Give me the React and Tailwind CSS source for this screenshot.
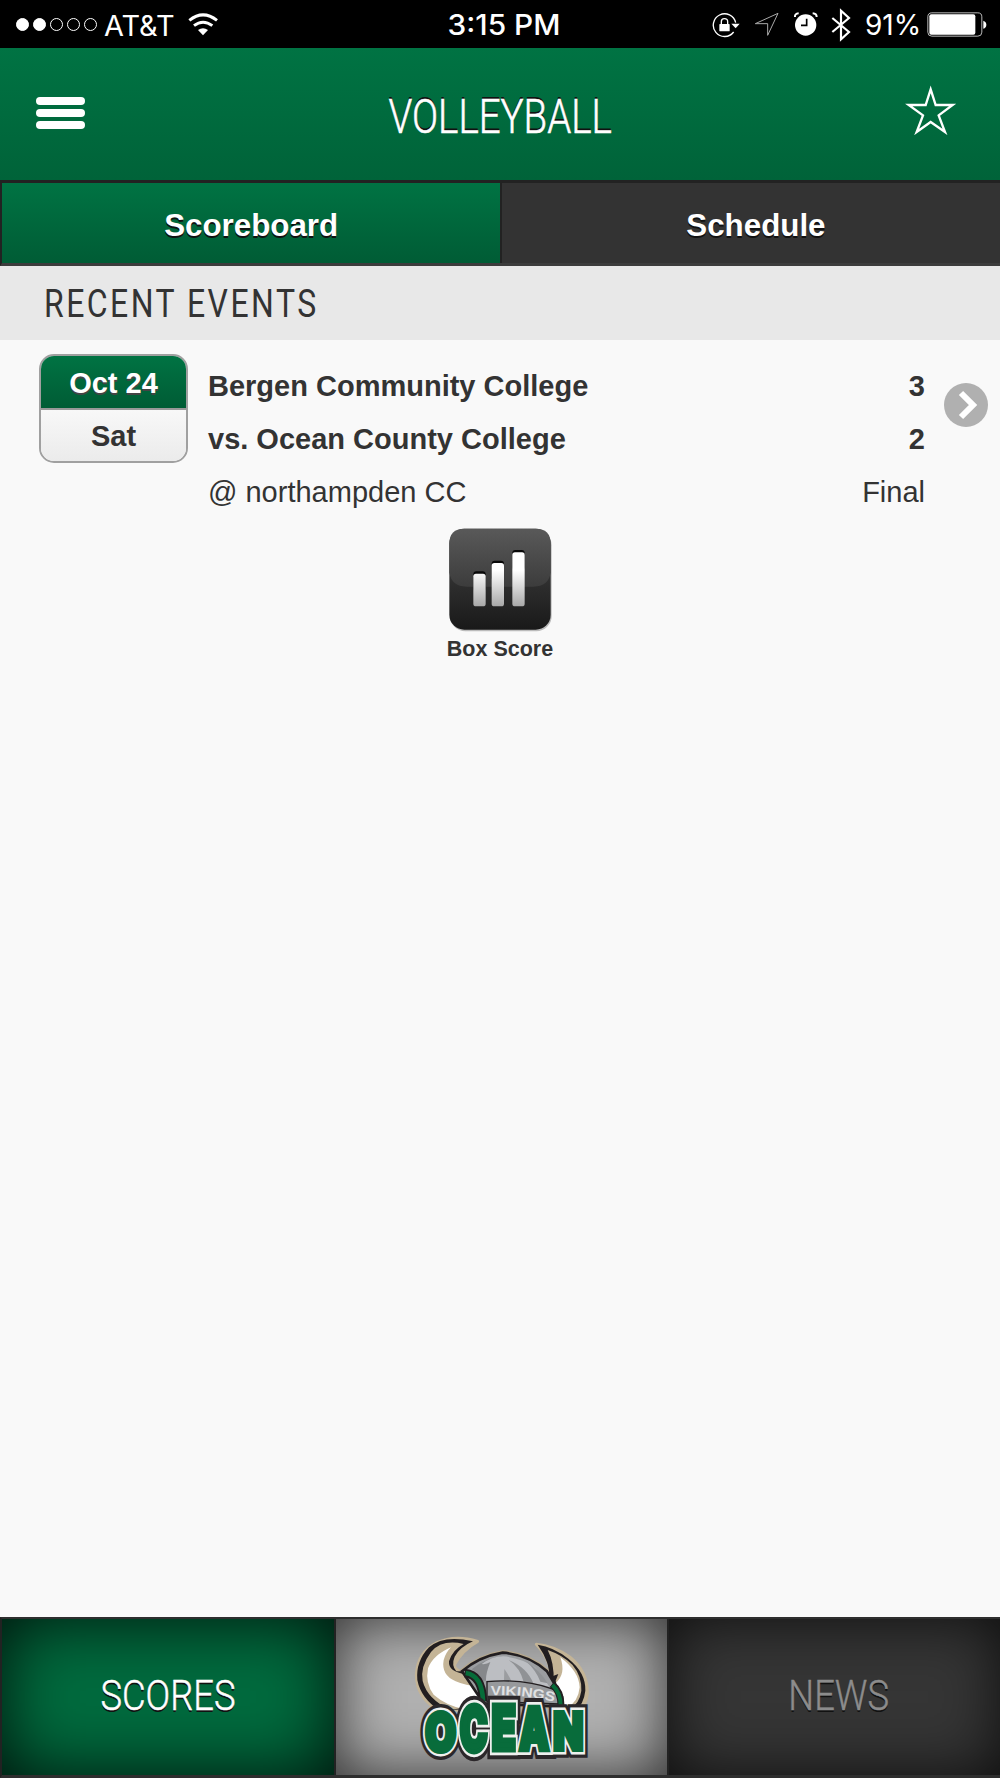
import clsx from "clsx";

const LINES = [
  { label: "Bergen Community College", value: "3", bold: true },
  { label: "vs. Ocean County College", value: "2", bold: true },
  { label: "@ northampden CC", value: "Final", bold: false },
];

const SIGNAL_DOTS = [true, true, false, false, false];

// Each letter of the team wordmark sits on its own baseline and is
// stretched separately.
const WORDMARK = [
  { ch: "O", x: 361, y: 452, sx: 1.21, sy: 1.58 },
  { ch: "C", x: 460, y: 453, sx: 1.12, sy: 1.86 },
  { ch: "E", x: 550, y: 451, sx: 1.2, sy: 1.87 },
  { ch: "A", x: 641, y: 451, sx: 1.14, sy: 1.78 },
  { ch: "N", x: 744, y: 451, sx: 1.19, sy: 1.56 },
];

function StatusBar() {
  return (
    <div className="h-12 bg-black text-white font-['Inter',sans-serif] text-[28px] leading-[48px] grid grid-cols-[1fr_auto_1fr]">
      <div className="flex items-center pl-4">
        <div className="flex gap-[4px]">
          {SIGNAL_DOTS.map((on, i) => (
            <span
              key={i}
              className={clsx("w-[13px] h-[13px] rounded-full border border-white", on ? "bg-white" : "border-[#bbb]")}
            />
          ))}
        </div>
        <span className="ml-[7px] w-[71px] h-12 whitespace-nowrap">
          <span className="inline-block origin-left scale-x-[1.03] pt-px">AT&amp;T</span>
        </span>
        <svg className="ml-[13px]" width="30" height="23" viewBox="565 37 90 69" fill="none" stroke="#fff" strokeWidth="9">
          <path d="M569 59 Q610 26 652 59" />
          <path d="M583 75 Q610 54 638 75" />
          <path d="M610 104 L595 88 Q610 77 625 88 Z" fill="#fff" stroke="none" />
        </svg>
      </div>
      <span className="font-medium pt-px pl-[7px]">
        <span className="inline-block scale-x-[1.065]">3:15 PM</span>
      </span>
      <div className="flex items-center justify-end pr-[13px]">
        <svg width="28" height="26" viewBox="124 34 84 78" fill="none" stroke="#fff" strokeWidth="4">
          <path d="M189 94 A34 34 0 1 1 195 66" />
          <path d="M182 69 H207 L195 83 Z" fill="#fff" stroke="none" />
          <rect x="146" y="70" width="31" height="22" rx="2" fill="#fff" stroke="none" />
          <path d="M152 72 V63 Q152 54 161 54 Q171 54 171 63 V72" />
        </svg>
        <svg className="ml-[14px]" width="25" height="25" viewBox="250 35 75 75" fill="none" stroke="#aaa" strokeWidth="3">
          <path d="M254 70 L322 39 L291 105 L291 70 Z" />
        </svg>
        <svg className="ml-[15px]" width="24" height="25" viewBox="370 37 72 75">
          <circle cx="405" cy="76" r="32" fill="#fff" />
          <path d="M373 52 Q372 42 384 41 M426 41 Q438 42 438 52" fill="none" stroke="#fff" strokeWidth="6" />
          <path d="M408 57 V77 H391" fill="none" stroke="#000" strokeWidth="5" />
        </svg>
        <svg className="ml-[13px]" width="20" height="34" viewBox="481 23 60 102" fill="none" stroke="#fff" strokeWidth="6.500">
          <path d="M485 53 L535 95 L511 117 V31 L535 53 L485 95" />
        </svg>
        <span className="ml-[14px] w-[57px] whitespace-nowrap">
          <span className="inline-block origin-left pt-px">91%</span>
        </span>
        <svg className="ml-[5px]" width="60" height="25" viewBox="770 37 180 75">
          <rect x="772.5" y="39.500" width="162" height="70" rx="12" fill="none" stroke="#bbb" strokeWidth="3" />
          <rect x="777" y="44" width="138" height="61" rx="6" fill="#fff" />
          <path d="M939 63 Q948 66 948 75 Q948 84 939 87 Z" fill="#fff" />
        </svg>
      </div>
    </div>
  );
}

function Header() {
  return (
    <header className="h-[132px] bg-linear-to-b from-[#007343] to-[#006339] flex items-center justify-between px-9 pr-[43px]">
      <div className="flex flex-col gap-1 w-[49px] -mt-[3px]">
        <span className="h-2 rounded-full bg-white" />
        <span className="h-2 rounded-full bg-white" />
        <span className="h-2 rounded-full bg-white" />
      </div>
      <h1 className="w-[230px] flex justify-center whitespace-nowrap pl-[10px] font-['Roboto',sans-serif] font-light text-[49px] leading-none text-white [-webkit-text-stroke:0.6px_white] [text-shadow:0_-2px_0_#111]">
        <span className="scale-x-[0.785] pt-[5px]">VOLLEYBALL</span>
      </h1>
      <svg className="-mt-[9px]" width="52" height="50" viewBox="706 255 156 150" fill="none" stroke="#fff" strokeWidth="7">
        <path d="M783 268 L798 315 L849 315 L807 346 L826 396 L783 366 L741 396 L760 346 L717 315 L768 315 Z" />
      </svg>
    </header>
  );
}

function Tabs() {
  const text = "flex items-center justify-center pt-[7px] text-[31px] font-bold text-white [text-shadow:0_2px_0_#111]";
  return (
    <div className="h-[86px] grid grid-cols-[498px_1fr] gap-0.5 bg-[#222] border-t-3 border-b-3 border-l-2 border-t-[#222] border-l-[#222] border-b-[#3c3c3c]">
      <div className={clsx(text, "bg-linear-to-b from-[#007343] to-[#005c35]")}>
        <span className="scale-x-[1.01]">Scoreboard</span>
      </div>
      <div className={clsx(text, "bg-[#333] pl-[10px]")}>
        <span className="scale-x-[1.01]">Schedule</span>
      </div>
    </div>
  );
}

function DateBadge() {
  return (
    <div className="w-[149px] h-[109px] rounded-[15px] border-2 border-[#a0a0a0] overflow-hidden text-[29px] font-bold text-center">
      <div className="h-[52px] leading-[54px] bg-linear-to-b from-[#007343] to-[#005c35] text-white [text-shadow:0_2px_0_#444]">
        Oct 24
      </div>
      <div className="h-[53px] leading-[52px] border-t-2 border-[#999] bg-linear-to-b from-[#f8f8f8] to-[#ebebeb]">Sat</div>
    </div>
  );
}

function BoxScoreIcon() {
  return (
    <svg className="ml-0.5" width="106" height="106" viewBox="84 50 318 318">
      <defs>
        <linearGradient id="base" x1="0" y1="0" x2="0" y2="1">
          <stop offset="0.5" stopColor="#303030" />
          <stop offset="1" stopColor="#191919" />
        </linearGradient>
        <linearGradient id="gloss" x1="0" y1="0" x2="0" y2="1">
          <stop offset="0" stopColor="#595959" />
          <stop offset="1" stopColor="#3c3c3c" />
        </linearGradient>
        <linearGradient id="bar" gradientUnits="userSpaceOnUse" x1="0" y1="180" x2="0" y2="288">
          <stop offset="0" stopColor="#fff" />
          <stop offset="1" stopColor="#a8a8a8" />
        </linearGradient>
      </defs>
      <rect x="90" y="59" width="305" height="304" rx="46" fill="#bbb" />
      <rect x="88" y="55" width="304" height="303" rx="45" fill="url(#base)" />
      <path d="M88 100 Q88 55 133 55 H347 Q392 55 392 100 V186 Q386 229 340 229 H140 Q94 229 88 186 Z" fill="url(#gloss)" />
      {[
        [160, 190],
        [215, 158],
        [277, 126],
      ].map(([x, y]) => (
        <g key={x}>
          <rect x={x} y={y - 7} width="37" height="60" rx="9" fill="#080808" />
          <rect x={x} y={y} width="37" height={288 - y} rx="8" fill="url(#bar)" />
        </g>
      ))}
    </svg>
  );
}

function VikingsLogo() {
  const leftHorn = "M472 124 Q425 150 402 195 Q404 213 432 218 Q478 222 488 305 L420 330 L352 330 Q288 290 288 225 Q291 158 350 128 Q403 103 472 124 Z";
  const rightHorn = "M648 133 Q700 138 748 171 Q802 215 801 280 Q798 315 774 333 L718 318 Q724 280 695 246 Q696 185 648 133 Z";
  const dome = "M425 214 Q475 170 547 158 Q625 164 680 214 L725 290 L724 320 L490 310 Z";
  return (
    <svg className="overflow-visible" width="176" height="124" viewBox="281 105 528 372">
      <g fill="#c4b496" stroke="#c4b496" strokeWidth="9" strokeLinejoin="round">
        <path d={leftHorn} />
        <path d={rightHorn} />
        <path d={dome} stroke="#b5a78c" strokeWidth="15" />
      </g>
      {/* horns */}
      <path d="M458 124 Q370 103 326 142 Q286 184 291 240 Q302 296 358 331 L480 326 L480 215 L408 214 Q392 196 403 170 Q420 140 458 124 Z" fill="#221e20" />
      <path d="M430 132 Q365 117 332 156 Q299 200 307 243 Q321 298 390 329 L472 318 L475 250 Q470 228 426 221 Q384 213 386 184 Q396 150 430 132 Z" fill="#c4b496" />
      <path d="M392 142 Q338 165 323 205 Q314 250 340 284 Q375 315 430 327 L472 306 L472 258 Q438 258 406 244 Q362 225 370 180 Q376 158 392 142 Z" fill="#fff" />
      <path d="M652 134 Q700 141 744 176 Q797 218 795 272 Q790 315 764 331 L720 318 L690 246 Q692 190 652 134 Z" fill="#221e20" />
      <path d="M682 150 Q726 165 756 194 Q785 228 783 272 Q778 311 747 328 L728 318 L700 246 Q702 188 682 150 Z" fill="#c4b496" />
      <path d="M720 172 Q776 214 778 262 Q774 305 740 324 L728 318 L726 282 L706 249 Q738 222 720 172 Z" fill="#fff" />
      <path d="M670 146 Q692 205 686 250 L714 276 L706 242 L714 222 L698 228 Q700 188 670 146 Z" fill="#221e20" />
      {/* helmet */}
      <path d={dome} fill="#9b9da0" stroke="#221e20" strokeWidth="8" />
      <path d="M454 208 Q494 174 548 169 Q515 190 503 241 L486 243 Q479 223 454 208 Z" fill="#86888b" />
      <path d="M484 192 Q514 170 548 169 Q602 173 644 202 Q664 224 687 260 Q632 245 573 243 Q562 220 552 207 L551 241 L497 242 Q496 220 510 186 Q498 194 484 192 Z" fill="#bcbec2" />
      <path d="M565 180 Q620 202 640 252 L610 246 Q600 204 565 180 Z M617 184 Q656 207 682 250 L660 245 Q647 211 617 184 Z" fill="#909295" />
      <path d="M500 245 Q610 235 700 268 Q717 285 719 312 L500 304 Z" fill="#97999c" stroke="#221e20" strokeWidth="4" />
      <path d="M433 219 Q486 224 488 304" fill="none" stroke="#221e20" strokeWidth="25" />
      <path d="M436 219 Q486 226 488 304" fill="none" stroke="#066c39" strokeWidth="14" />
      <path d="M695 253 Q722 275 722 317" fill="none" stroke="#221e20" strokeWidth="21" />
      <path d="M696 255 Q721 277 721 317" fill="none" stroke="#066c39" strokeWidth="12" />
      <path id="band" d="M511 286 Q610 283 708 307" fill="none" />
      <text className="font-['Liberation_Sans',sans-serif]" fontSize="40" fontWeight="700" fill="#e0e1e3">
        <textPath href="#band" textLength="192" lengthAdjust="spacingAndGlyphs">VIKINGS</textPath>
      </text>
      {/* wordmark: dark outline, white outline, green fill */}
      {[
        ["#2b272a", 30],
        ["#eef0ee", 17],
        ["#086c3b", 8],
      ].map(([color, width]) => (
        <g
          key={color}
          className="font-['Inter',sans-serif]"
          fontSize="100"
          fontWeight="900"
          textAnchor="middle"
          fill={color}
          stroke={color}
          strokeWidth={width}
        >
          {WORDMARK.map((l) => (
            <text key={l.ch} transform={`translate(${l.x} ${l.y}) scale(${l.sx} ${l.sy})`}>
              {l.ch}
            </text>
          ))}
        </g>
      ))}
    </svg>
  );
}

function BottomNav() {
  const cell = "flex items-center justify-center font-['Roboto',sans-serif] font-light text-[43px] leading-none [text-shadow:0_2px_0_#111]";
  return (
    <nav className="h-[161px] grid grid-cols-[332px_331px_1fr] gap-0.5 bg-[#222] border-t-2 border-b-3 border-l-2 border-t-[#2e2e2e] border-b-[#2e2e2e] border-l-[#222]">
      <div className={clsx(cell, "bg-[#006b3e] text-white [-webkit-text-stroke:0.5px_white] shadow-[inset_0_0_70px_rgba(0,0,0,0.85)]")}>
        <span className="scale-x-[0.845] -mt-[3px]">SCORES</span>
      </div>
      <div className="bg-[#b0b0b0] shadow-[inset_0_0_60px_rgba(0,0,0,0.75)] flex justify-center pt-4">
        <VikingsLogo />
      </div>
      <div className={clsx(cell, "bg-[#353535] text-[#8c8c8c] [-webkit-text-stroke:0.5px_#8c8c8c] shadow-[inset_0_0_60px_rgba(0,0,0,0.75)]")}>
        <span className="scale-x-[0.845] -mt-[3px] pl-[11px]">NEWS</span>
      </div>
    </nav>
  );
}

export default function App() {
  return (
    <div className="w-[1000px] h-[1778px] overflow-hidden flex flex-col bg-[#f9f9f9] text-[#333] font-['Liberation_Sans',Arial,sans-serif]">
      <StatusBar />
      <Header />
      <Tabs />
      <h2 className="h-[74px] pl-[44px] pt-[3px] bg-[#e8e8e8] flex items-center whitespace-nowrap font-['Roboto',sans-serif] text-[38.500px] leading-none tracking-[3px]">
        <span className="origin-left scale-x-[0.83]">RECENT EVENTS</span>
      </h2>

      <main className="grow">
        <div className="flex pl-[39px] pr-3">
          <div className="pt-[14px]">
            <DateBadge />
          </div>
          <div className="grow pt-[20px] pl-5 pr-[19px]">
            {LINES.map((line) => (
              <div
                key={line.label}
                className={clsx("h-[53px] leading-[53px] flex justify-between text-[29px]", line.bold && "font-bold")}
              >
                <span>{line.label}</span>
                <span>{line.value}</span>
              </div>
            ))}
          </div>
          <svg className="mt-[43px]" width="44" height="44" viewBox="0 0 44 44">
            <circle cx="22" cy="22" r="22" fill="#b0b0b0" />
            <path d="M17 10 L29 22 L17 34" fill="none" stroke="#fff" strokeWidth="6" />
          </svg>
        </div>
        <div className="flex flex-col items-center mt-2">
          <BoxScoreIcon />
          <span className="text-[21.500px] leading-6 font-bold mt-1">Box Score</span>
        </div>
      </main>

      <BottomNav />
    </div>
  );
}
